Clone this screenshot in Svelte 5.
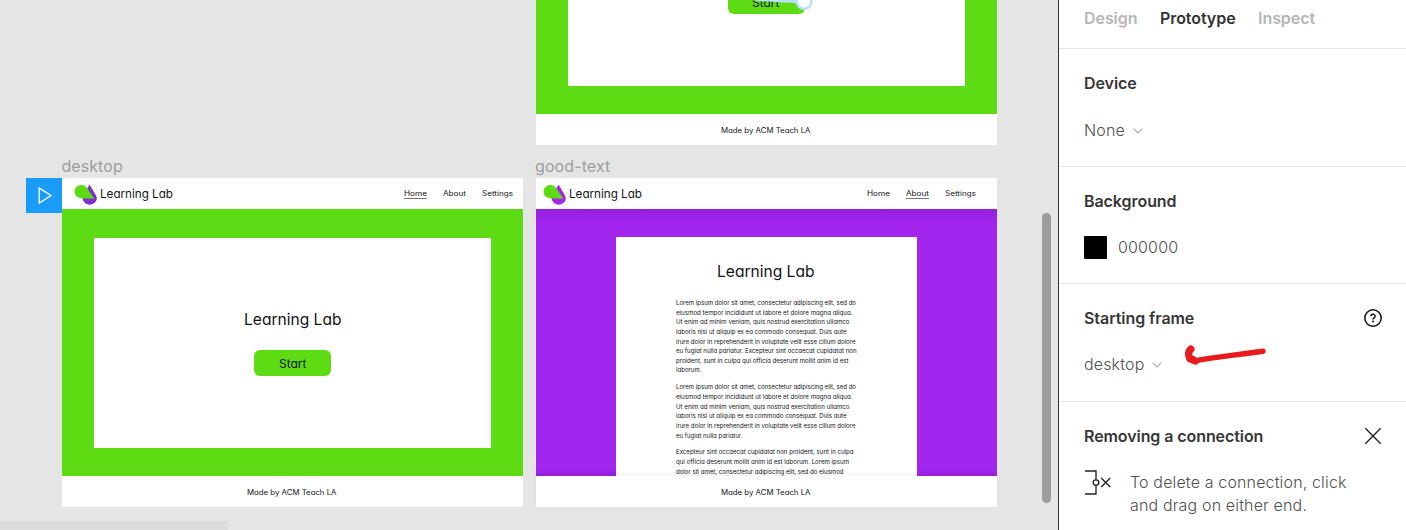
<script>
  const navItems = [
    { text: 'Home', w: 23 },
    { text: 'About', w: 23 },
    { text: 'Settings', w: 31 }
  ];

  const paragraphs = [
    [
      ['Lorem ipsum dolor sit amet, consectetur adipiscing elit, sed do', 180],
      ['eiusmod tempor incididunt ut labore et dolore magna aliqua.', 176.5],
      ['Ut enim ad minim veniam, quis nostrud exercitation ullamco', 173.5],
      ['laboris nisi ut aliquip ex ea commodo consequat. Duis aute', 170.5],
      ['irure dolor in reprehenderit in voluptate velit esse cillum dolore', 179.5],
      ['eu fugiat nulla pariatur. Excepteur sint occaecat cupidatat non', 180.5],
      ['proident, sunt in culpa qui officia deserunt mollit anim id est', 172.5],
      ['laborum.', 25.5]
    ],
    [
      ['Lorem ipsum dolor sit amet, consectetur adipiscing elit, sed do', 180],
      ['eiusmod tempor incididunt ut labore et dolore magna aliqua.', 176.5],
      ['Ut enim ad minim veniam, quis nostrud exercitation ullamco', 173.5],
      ['laboris nisi ut aliquip ex ea commodo consequat. Duis aute', 170.5],
      ['irure dolor in reprehenderit in voluptate velit esse cillum dolore', 179.5],
      ['eu fugiat nulla pariatur.', 66.5]
    ],
    [
      ['Excepteur sint occaecat cupidatat non proident, sunt in culpa', 177.5],
      ['qui officia deserunt mollit anim id est laborum. Lorem ipsum', 173],
      ['dolor sit amet, consectetur adipiscing elit, sed do eiusmod', 167.5]
    ]
  ];
</script>

{#snippet label(text, w, size, h)}
  <svg class="label" width={w} height={h}>
    <text x="0" y={h * 0.75} font-size={size} textLength={w} lengthAdjust="spacingAndGlyphs">{text}</text>
  </svg>
{/snippet}

{#snippet header(active, dark)}
  <header>
    <svg class="logo" width="24" height="22" viewBox="0 0 24 22">
      <path d="M15.5 0.5L22 11.5C24.5 16 20.5 20.8 15.8 20.7C10.8 20.6 7.5 16 9 12Z" fill={dark} />
      <path d="M7 1C10.4 .7 12.3 2.5 13.4 4.4L20.3 14.8L7.5 14.3C3.3 14.1 .5 11.3 .5 7.6C.5 4 3.3 1.2 7 1Z" fill="#5edc13" />
    </svg>
    {@render label('Learning Lab', 73, 11.8, 16)}
    <nav>
      {#each navItems as item}
        <span class:active={item.text === active}>{@render label(item.text, item.w, 7.2, 9)}</span>
      {/each}
    </nav>
  </header>
{/snippet}

{#snippet footer()}
  <footer>{@render label('Made by ACM Teach LA', 89.5, 7.3, 10)}</footer>
{/snippet}

{#snippet startCard()}
  <div class="body green">
    <div class="card">
      {@render label('Learning Lab', 97.5, 15.7, 20)}
      <div class="button">{@render label('Start', 27.5, 11.4, 16)}</div>
    </div>
  </div>
{/snippet}

{#snippet chevron()}
  <svg class="chevron" width="10" height="6" viewBox="0 0 10 6"><path d="M.7 .7L5 5L9.3 .7" /></svg>
{/snippet}

<div class="app">
  <main class="canvas">
    <section class="frame top">
      <header></header>
      {@render startCard()}
      {@render footer()}
    </section>
    <svg class="wire" width="90" height="14" viewBox="0 0 90 14">
      <path d="M8 -2L68 -2L68 3.2L30 1.2Z" fill="#b9e0ff" />
      <circle cx="74.2" cy="1.7" r="7.2" fill="#fff" stroke="#b9e0ff" stroke-width="2.6" />
    </svg>

    <div class="frame-name n1">desktop</div>
    <div class="frame-name n2">good-text</div>

    <div class="play">
      <svg width="35" height="35" viewBox="0 0 35 35"><path d="M13.2 10.1L25 17.5L13.2 25Z" fill="none" stroke="#fff" stroke-width="1.3" /></svg>
    </div>

    <section class="frame desktop">
      {@render header('Home', '#7e30cf')}
      {@render startCard()}
      {@render footer()}
    </section>

    <section class="frame article">
      {@render header('About', '#a226ed')}
      <div class="body purple">
        <article>
          <div class="title">{@render label('Learning Lab', 97.5, 15.7, 20)}</div>
          {#each paragraphs as lines}
            <div class="para">
              {#each lines as [text, w]}
                {@render label(text, w, 6, 9.63)}
              {/each}
            </div>
          {/each}
        </article>
      </div>
      {@render footer()}
    </section>

    <div class="vbar"></div>
    <div class="hbar"></div>
  </main>

  <aside>
    <div class="tabs"><span>Design</span><span class="on">Prototype</span><span>Inspect</span></div>
    <section class="group">
      <h2>Device</h2>
      <div class="value"><span>None</span>{@render chevron()}</div>
    </section>
    <section class="group">
      <h2>Background</h2>
      <div class="value color"><i class="swatch"></i><span class="hex">000000</span></div>
    </section>
    <section class="group">
      <h2>Starting frame</h2>
      <div class="value frame-pick"><span>desktop</span>{@render chevron()}</div>
      <svg class="help" width="20" height="20" viewBox="0 0 20 20">
        <circle cx="10" cy="10" r="8.2" fill="none" stroke="#111" stroke-width="1.5" />
        <path d="M7.9 8.3C7.9 5.6 12.2 5.7 12.1 8.2C12.1 9.8 10 9.8 10 11.5" fill="none" stroke="#111" stroke-width="1.5" />
        <circle cx="10" cy="13.6" r="1" fill="#111" />
      </svg>
      <svg class="mark" width="90" height="24" viewBox="0 0 90 24" fill="none" stroke="#e81c1c" stroke-linecap="round" stroke-linejoin="round">
        <path d="M9.8 5.2C6.5 8.5 7.5 11 9 15L12.5 15.8" stroke-width="7.4" />
        <path d="M12.5 17.2C30 13.5 48 11.7 63 9.8L82 7.2" stroke-width="5.4" />
        <path d="M14.8 17V18.3" stroke-width="5" />
      </svg>
    </section>
    <section class="group last">
      <h2 class="tight">Removing a connection</h2>
      <svg class="close" width="18" height="18" viewBox="0 0 18 18"><path d="M1.3 1.3L16.7 16.7M16.7 1.3L1.3 16.7" stroke="#222" stroke-width="1.4" /></svg>
      <div class="tip">
        <svg width="28" height="26" viewBox="0 0 28 26" fill="none" stroke="#222" stroke-width="1.35">
          <path d="M1 1H12V9.8M12 15.4V24H1" />
          <circle cx="12" cy="12.6" r="2.8" />
          <path d="M17.2 8L26.2 17M26.2 8L17.2 17" />
        </svg>
        <p>To delete a connection, click<br />and drag on either end.</p>
      </div>
    </section>
  </aside>
</div>

<style>
  :global(body) { margin: 0; overflow: hidden; }
  .app { display: flex; width: 1406px; height: 530px; overflow: hidden; font-family: Inter, sans-serif; }
  .canvas { position: relative; width: 1058px; height: 530px; overflow: hidden; background: #e5e5e5; flex: none; }
  svg { display: block; flex: none; }
  .label { overflow: visible; fill: #111316; font-feature-settings: 'cv11'; }
  .frame { position: absolute; display: flex; flex-direction: column; width: 461px; height: 329px; background: #fff; }
  .top { left: 535.5px; top: -184px; }
  .desktop { left: 62px; top: 178px; }
  .article { left: 535.5px; top: 178px; }
  header { display: flex; align-items: center; height: 31px; flex: none; box-sizing: border-box; padding: 0 10px 0 12px; }
  .logo { margin-right: 2px; margin-top: 2px; }
  .article header { padding: 0 20.5px 0 7px; }
  nav { display: flex; gap: 16px; margin-left: auto; }
  .active { box-shadow: 0 0.8px #555; }
  .body { height: 267px; flex: none; display: flex; justify-content: center; overflow: hidden; }
  .green { background: #5edc13; }
  .purple { background: linear-gradient(#9321db 0, #a226ed 14px, #a226ed 258px, #9a22e2 100%); }
  .card { width: 397px; height: 210.5px; margin-top: 28.5px; background: #fff; display: flex; flex-direction: column; align-items: center; box-sizing: border-box; padding-top: 72px; }
  .button { width: 77px; height: 26px; margin-top: 20.5px; border-radius: 6px; background: #5edc13; display: flex; align-items: center; justify-content: center; }
  .button .label { margin-top: 1px; }
  .top .button .label { margin-top: 3px; }
  footer { display: flex; height: 31px; align-items: center; justify-content: center; flex: none; }
  footer .label { margin-right: 1px; }
  .article footer { box-shadow: 0 -2px 4px #0000000d; }
  article { width: 301px; height: 260px; margin-top: 28px; background: #fff; box-sizing: border-box; padding: 24.5px 0 0 60px; }
  .title { margin: 0 0 16.6px 41.5px; }
  .para { margin-bottom: 7.3px; }
  .wire { position: absolute; left: 730px; top: 0; }
  .frame-name { position: absolute; top: 156px; font-size: 16px; line-height: 20px; color: #9e9e9e; }
  .n1 { left: 61.5px; letter-spacing: 0.06px; }
  .n2 { left: 535px; letter-spacing: 0.1px; }
  .play { position: absolute; left: 26px; top: 177.5px; width: 35.5px; height: 35px; background: #1a9dfa; }
  .vbar { position: absolute; left: 1042px; top: 213px; width: 9px; height: 290px; border-radius: 5px; background: #9c9c9c; }
  .hbar { position: absolute; left: 0; top: 520.5px; width: 228px; height: 10px; background: #dcdcdc; }

  aside { width: 348px; height: 530px; box-sizing: border-box; border-left: 1px solid #333; background: #fff; color: #363636; font-size: 16px; line-height: 24px; }
  .tabs { display: flex; gap: 22.5px; height: 49px; box-sizing: border-box; padding: 6px 0 0 25px; border-bottom: 1px solid #e5e5e5; font-weight: 600; color: #b5b5b5; letter-spacing: -0.06px; }
  .tabs .on { color: #333; }
  .group { position: relative; height: 117.67px; box-sizing: border-box; padding: 22px 25px 0; border-bottom: 1px solid #e5e5e5; }
  .last { border: 0; }
  h2 { margin: 0; font-size: 16px; line-height: 24px; font-weight: 600; letter-spacing: -0.06px; }
  .tight { letter-spacing: -0.08px; }
  .value { display: flex; align-items: center; height: 24px; margin-top: 23px; color: #505050; font-weight: 350; letter-spacing: 0.15px; }
  .frame-pick { margin-top: 22px; }
  .hex { margin-top: -1px; }
  .chevron { margin: 1px 0 0 8px; fill: none; stroke: #aaa; stroke-width: 1.2; }
  .swatch { width: 23px; height: 23px; border-radius: 1px; background: #000; margin-right: 11px; }
  .help { position: absolute; left: 303.7px; top: 24px; }
  .mark { position: absolute; left: 122px; top: 60px; }
  .close { position: absolute; left: 305px; top: 25.5px; }
  .tip { display: flex; gap: 18px; margin-top: 21px; color: #505050; font-weight: 350; }
  p { margin: 2px 0 0; line-height: 23px; white-space: nowrap; letter-spacing: 0.15px; }
  .tip svg { margin-top: 1px; }
</style>
